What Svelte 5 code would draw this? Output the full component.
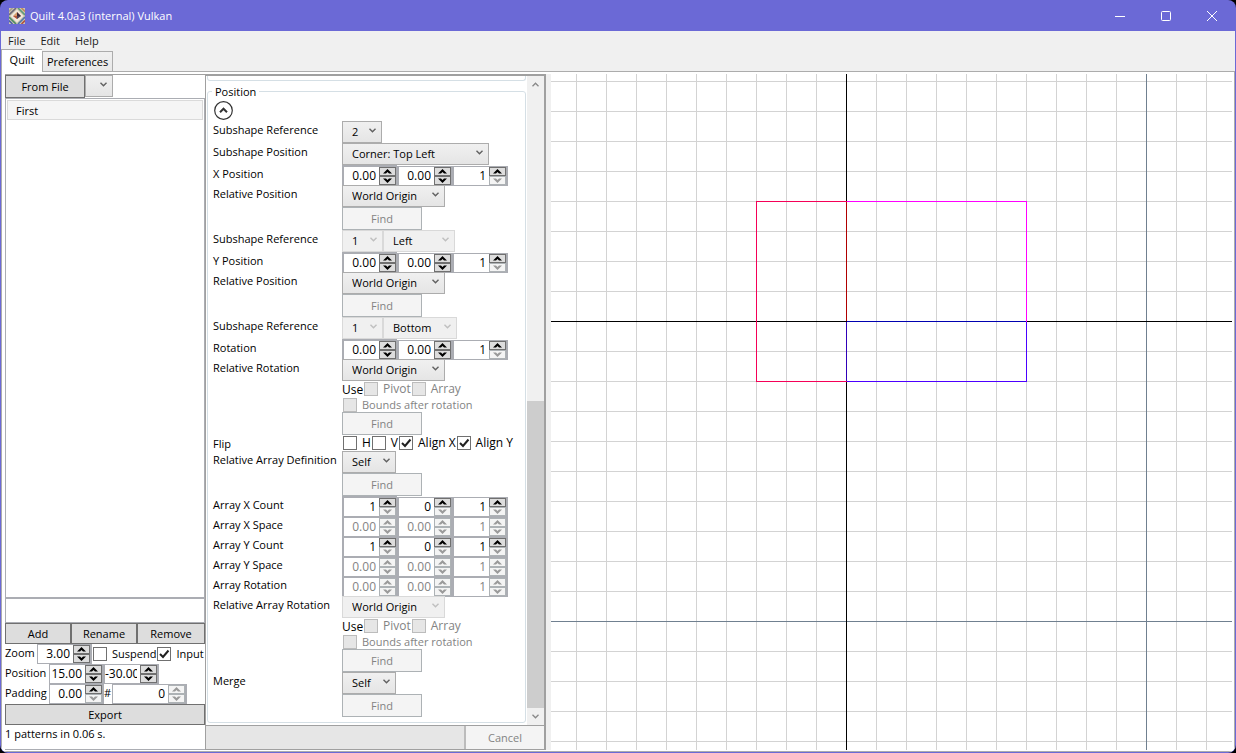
<script lang="ts">
  type Spin = { v: string; up: boolean; down: boolean };
  const sp = (v: string, up = true, down = true): Spin => ({ v, up, down });
  const free = [sp('0.00'), sp('0.00'), sp('1', true, false)];
  const count = [sp('1', true, false), sp('0', true, false), sp('1', true, false)];
  const off = [sp('0.00', false, false), sp('0.00', false, false), sp('1', false, false)];

  type Sel = { v: string; w: number; off?: boolean };
  type Row = { label?: string; kind: 'select' | 'spin' | 'find' | 'use' | 'bounds' | 'flip'; sels?: Sel[]; spins?: Spin[] };
  const world = { v: 'World Origin', w: 103 };
  const rows: Row[] = [
    { label: 'Subshape Reference', kind: 'select', sels: [{ v: '2', w: 40 }] },
    { label: 'Subshape Position', kind: 'select', sels: [{ v: 'Corner: Top Left', w: 147 }] },
    { label: 'X Position', kind: 'spin', spins: free },
    { label: 'Relative Position', kind: 'select', sels: [world] },
    { kind: 'find' },
    { label: 'Subshape Reference', kind: 'select', sels: [{ v: '1', w: 41, off: true }, { v: 'Left', w: 72, off: true }] },
    { label: 'Y Position', kind: 'spin', spins: free },
    { label: 'Relative Position', kind: 'select', sels: [world] },
    { kind: 'find' },
    { label: 'Subshape Reference', kind: 'select', sels: [{ v: '1', w: 41, off: true }, { v: 'Bottom', w: 74, off: true }] },
    { label: 'Rotation', kind: 'spin', spins: free },
    { label: 'Relative Rotation', kind: 'select', sels: [world] },
    { kind: 'use' },
    { kind: 'bounds' },
    { kind: 'find' },
    { label: 'Flip', kind: 'flip' },
    { label: 'Relative Array Definition', kind: 'select', sels: [{ v: 'Self', w: 54 }] },
    { kind: 'find' },
    { label: 'Array X Count', kind: 'spin', spins: count },
    { label: 'Array X Space', kind: 'spin', spins: off },
    { label: 'Array Y Count', kind: 'spin', spins: count },
    { label: 'Array Y Space', kind: 'spin', spins: off },
    { label: 'Array Rotation', kind: 'spin', spins: off },
    { label: 'Relative Array Rotation', kind: 'select', sels: [{ ...world, off: true }] },
    { kind: 'use' },
    { kind: 'bounds' },
    { kind: 'find' },
    { label: 'Merge', kind: 'select', sels: [{ v: 'Self', w: 54 }] },
    { kind: 'find' }
  ];

  // Grid lines of the drawing area, every 30px around the origin
  const xs = Array.from({ length: 80 }, (_, i) => 25.5 + i * 30);
  const ys = Array.from({ length: 60 }, (_, i) => 7.5 + i * 30);
</script>

{#snippet dropdown(s: Sel, label: string)}
  <span class="combo" class:off={s.off} style="width:{s.w}px">
    <select aria-label={label} disabled={s.off}><option>{s.v}</option></select>
    <svg viewBox="0 0 7 5" width="7" height="5"><path d="M.5 .8 3.5 3.8 6.5 .8" /></svg>
  </span>
{/snippet}

{#snippet spinner(s: Spin, label: string, id: string | undefined)}
  <span class="spin" class:off={!s.up && !s.down}>
    <input {id} type="text" value={s.v} aria-label={id ? undefined : label} disabled={!s.up && !s.down} />
    <span class="steps">
      <button aria-label="{label} up" disabled={!s.up}><svg viewBox="0 0 9 5" width="9" height="5"><path d="M0 4.5 4.5 0 9 4.5H6L4.5 3 3 4.5z" /></svg></button>
      <button aria-label="{label} down" disabled={!s.down}><svg viewBox="0 0 9 5" width="9" height="5"><path d="M0 .5 4.5 5 9 .5H6L4.5 2 3 .5z" /></svg></button>
    </span>
  </span>
{/snippet}

{#snippet check(text: string, on: boolean, off: boolean)}
  <label class="check" class:off>
    <span class="tick">
      <input type="checkbox" checked={on} disabled={off} />
      {#if on}<svg viewBox="0 0 14 14" width="14" height="14"><path d="M3 7 6 10 11.5 3.5" /></svg>{/if}
    </span>{text}
  </label>
{/snippet}

<div class="window">
  <header class="title">
    <svg class="logo" viewBox="0 0 16 16" width="16" height="16">
      <rect width="16" height="16" fill="#cfc6b2" />
      <g fill="none" stroke-width="1.6">
        <path d="M0 7 7 0" stroke="#6d6a78" /><path d="M0 3.5 3.5 0" stroke="#a9a08c" />
        <path d="M9 0 16 7" stroke="#5d9a78" /><path d="M12.5 0 16 3.5" stroke="#c08a5c" />
        <path d="M0 9 7 16" stroke="#4d8a62" /><path d="M0 12.5 3.5 16" stroke="#4a62a0" />
        <path d="M9 16 16 9" stroke="#4f74a8" /><path d="M12.5 16 16 12.5" stroke="#b0503c" />
      </g>
      <path d="M8 1.5 14.5 8 8 14.5 1.5 8z" fill="#f0e9dd" />
      <path d="M8 4l4 4-4 3-4-3z" fill="#d59b6a" />
      <path d="M8 4l4 4H8z" fill="#3a2838" /><path d="M4 8h4v3z" fill="#b4553d" /><path d="M8 8h4l-4 3z" fill="#4a4258" />
    </svg>
    <h1>Quilt 4.0a3 (internal) Vulkan</h1>
    <div class="winbtns">
      <button aria-label="Minimize"><svg viewBox="0 0 10 10" width="10" height="10"><path d="M0 5.5h10" /></svg></button>
      <button aria-label="Maximize"><svg viewBox="0 0 10 10" width="10" height="10"><rect x=".5" y=".5" width="9" height="9" rx="1" /></svg></button>
      <button aria-label="Close"><svg viewBox="0 0 10 10" width="10" height="10"><path d="M0 0 10 10M10 0 0 10" /></svg></button>
    </div>
  </header>

  <div class="body">
    <nav class="menu"><button>File</button><button>Edit</button><button>Help</button></nav>
    <div class="tabs" role="tablist">
      <button role="tab" aria-selected="true" class="tab on">Quilt</button>
      <button role="tab" aria-selected="false" class="tab">Preferences</button>
    </div>

    <main>
      <aside>
        <div class="bar">
          <button class="btn from">From File</button>
          {@render dropdown({ v: '', w: 28 }, 'Source')}
        </div>
        <ul class="list"><li>First</li></ul>
        <input class="name" type="text" aria-label="Pattern name" />
        <div class="three">
          <button class="btn">Add</button><button class="btn">Rename</button><button class="btn">Remove</button>
        </div>
        <div class="line">
          <label for="zoom" class="cap zoom">Zoom</label>{@render spinner(sp('3.00'), 'Zoom', 'zoom')}
          {@render check('Suspend', false, false)}{@render check('Input', true, false)}
        </div>
        <div class="line">
          <label for="pos" class="cap">Position</label>{@render spinner(sp('15.00'), 'Position X', 'pos')}{@render spinner(sp('-30.00'), 'Position Y', undefined)}
        </div>
        <div class="line">
          <label for="pad" class="cap">Padding</label>{@render spinner(sp('0.00', true, false), 'Padding', 'pad')}
          <label for="num" class="cap hash">#</label><span class="wide">{@render spinner({ v: '0', up: false, down: false }, 'Number', 'num')}</span>
        </div>
        <button class="btn export">Export</button>
        <p class="status">1 patterns in 0.06 s.</p>
      </aside>

      <section class="editor">
        <div class="view">
          <div class="scroll">
            <div class="prev"></div>
            <fieldset>
              <legend>Position</legend>
              <button class="fold" aria-label="Collapse">
                <svg viewBox="0 0 19 19" width="19" height="19"><circle cx="9.5" cy="9.5" r="8.8" /><path d="M6 11.2 9.5 7.7 13 11.2" /></svg>
              </button>
              <div class="rows">
                {#each rows as r}
                  <div class="row">
                    <span class="lab">{r.label ?? ''}</span>
                    <div class="ctl {r.kind}">
                      {#if r.kind === 'select'}
                        {#each r.sels ?? [] as s}{@render dropdown(s, r.label ?? '')}{/each}
                      {:else if r.kind === 'spin'}
                        {#each r.spins ?? [] as s}{@render spinner(s, r.label ?? '', undefined)}{/each}
                      {:else if r.kind === 'find'}
                        <button disabled>Find</button>
                      {:else if r.kind === 'use'}
                        <span class="usetext">Use</span>{@render check('Pivot', false, true)}{@render check('Array', false, true)}
                      {:else if r.kind === 'bounds'}
                        {@render check('Bounds after rotation', false, true)}
                      {:else}
                        {@render check('H', false, false)}{@render check('V', false, false)}{@render check('Align X', true, false)}{@render check('Align Y', true, false)}
                      {/if}
                    </div>
                  </div>
                {/each}
              </div>
            </fieldset>
          </div>
          <div class="track">
            <button aria-label="Scroll up"><svg viewBox="0 0 7 5" width="7" height="5"><path d="M.5 4.2 3.5 1.2 6.5 4.2" /></svg></button>
            <div class="rail"><div class="thumb"></div></div>
            <button aria-label="Scroll down"><svg viewBox="0 0 7 5" width="7" height="5"><path d="M.5 .8 3.5 3.8 6.5 .8" /></svg></button>
          </div>
        </div>
        <div class="foot"><div class="progress"></div><button disabled>Cancel</button></div>
      </section>

      <svg class="canvas" shape-rendering="crispEdges" role="img" aria-label="Pattern drawing">
        <g stroke="#d3d3d3">
          {#each xs as x}<line x1={x} x2={x} y1="0" y2="100%" />{/each}
          {#each ys as y}<line x1="0" x2="100%" y1={y} y2={y} />{/each}
        </g>
        <g stroke="#708090">
          <line x1="595.5" x2="595.5" y1="0" y2="100%" />
          <line x1="0" x2="100%" y1="547.5" y2="547.5" />
        </g>
        <g stroke="#000">
          <line x1="295.5" x2="295.5" y1="0" y2="100%" />
          <line x1="0" x2="100%" y1="247.5" y2="247.5" />
        </g>
        <g fill="none">
          <path d="M295.5 127.5H205.5V307.5H295.5" stroke="#f50057" />
          <path d="M295.5 127.5H475.5V247.5" stroke="#ff00ff" />
          <path d="M295.5 128V247" stroke="#b00000" />
          <path d="M296 247.5H475" stroke="#0000b0" />
          <path d="M295.5 248V307" stroke="#3000b8" />
          <path d="M296 307.5H475.5V248" stroke="#4c00ff" />
        </g>
      </svg>
    </main>
  </div>
</div>

<style>
  :global(body) { margin: 0; background: #000; }
  * { box-sizing: border-box; }
  .window {
    height: 100vh; display: flex; flex-direction: column; background: #6b69d6;
    border-radius: 8px; overflow: hidden; padding: 0 1px 1px;
    font: 11px/18px "Open Sans", "Noto Sans", sans-serif; color: #000;
  }
  button, input, select { font: inherit; color: inherit; margin: 0; padding: 0; border: 0; border-radius: 0; background: none; }
  .title { height: 31px; flex: none; display: flex; align-items: center; padding-left: 8px; color: #fff; }
  h1 { font: inherit; margin: 0 auto 0 5px; }
  .winbtns { display: flex; }
  .winbtns button { width: 46px; height: 31px; display: grid; place-items: center; }
  .winbtns svg { fill: none; stroke: #fff; }

  .body { flex: 1; min-height: 0; display: flex; flex-direction: column; background: #f0f0f0; border-radius: 0 0 6px 6px; overflow: hidden; }
  .menu { display: flex; gap: 15px; padding: 1px 7px 0; height: 18px; }
  .menu button { color: #212121; }
  .tabs { display: flex; align-items: flex-end; height: 22px; }
  .tab { height: 20px; border: 1px solid #acacac; border-bottom: 0; padding: 0 4px; background: linear-gradient(#f0f0f0, #e8e8e8); }
  .tab.on { height: 23px; width: 41px; background: #fff; padding: 0 0 3px; margin-bottom: -1px; z-index: 1; border-right: 0; }

  main { flex: 1; min-height: 0; display: flex; background: #fff; border: 1px solid #acacac; padding: 2px 2px 1px 3px; }
  aside { width: 200px; flex: none; display: flex; flex-direction: column; border-top: 1px solid #a0a0a0; overflow: hidden; }
  .bar { display: flex; height: 23px; flex: none; }
  .btn { background: #ddd; border: 1px solid #707070; height: 21px; }
  .from { width: 80px; height: 23px; }
  .list { flex: 1; list-style: none; margin: 0; padding: 1px; border: 1px solid #abadb3; }
  .list li { height: 20px; border: 1px solid #dadada; background: #f5f5f5; padding-left: 8px; line-height: 20px; }
  .name { height: 25px; border: 1px solid #abadb3; width: 100%; flex: none; }
  .three { display: grid; grid-template-columns: 66px 66px 1fr; }
  .line { display: flex; height: 20px; }
  .cap { flex: none; width: 44px; }
  .zoom { width: 32px; }
  .hash { width: 8px; }
  .line .check { height: 20px; }
  .export { width: 100%; flex: none; }
  .status { margin: 0; height: 25px; flex: none; border-bottom: 1px solid #abadb3; }

  .combo { display: inline-grid; height: 22px; border: 1px solid #acacac; background: linear-gradient(#f0f0f0, #e5e5e5); flex: none; }
  .combo select { grid-area: 1/1; appearance: none; width: 100%; padding-left: 9px; outline: 0; opacity: 1; color: #000; }
  .combo svg { grid-area: 1/1; justify-self: end; margin: 6px 5px 0 0; pointer-events: none; fill: none; stroke: #606060; stroke-width: 1.4; }
  .combo.off { border-color: #d9d9d9; background: #f0f0f0; }
  .combo.off svg { stroke: #bfbfbf; }

  .spin { display: flex; width: 55px; height: 20px; border: 1px solid #abadb3; border-right-width: 2px; background: #fff; flex: none; }
  .spin input { flex: 1; min-width: 0; width: 0; text-align: right; padding-right: 3px; font-size: 12px; }
  .spin.off input { color: #838383; }
  .steps { width: 17px; display: grid; grid-template-rows: 9px 9px; }
  .steps button { border: 1px solid #707070; background: #ddd; display: grid; place-items: center; }
  .steps button:disabled { border-color: #adb2b5; background: #f4f4f4; }
  .steps button:disabled path { fill: #9a9a9a; }
  .wide { display: contents; }
  .wide .spin { width: 75px; }
  .wide .spin input { color: #000; }

  .check { display: inline-flex; align-items: center; gap: 5px; height: 16px; flex: none; margin-left: 1px; }
  .tick { display: grid; }
  .tick input { grid-area: 1/1; appearance: none; width: 14px; height: 14px; border: 1px solid #707070; background: #fff; }
  .tick svg { grid-area: 1/1; fill: none; stroke: #212121; stroke-width: 2; pointer-events: none; }
  .check.off { color: #838383; }
  .check.off input { border-color: #bcbcbc; background: #e6e6e6; }

  .editor { width: 341px; flex: none; display: flex; flex-direction: column; border: 2px solid #a0a0a0; border-left-width: 1px; border-bottom-width: 1px; }
  .view { flex: 1; min-height: 0; display: flex; overflow: hidden; }
  .scroll { flex: 1; padding: 0 1px; }
  .prev { height: 5px; border: 1px solid #d5dfe5; border-top: 0; border-radius: 0 0 3px 3px; }
  fieldset { margin: 2px 0 0; padding: 0 0 5px 5px; border: 1px solid #d5dfe5; border-radius: 3px; min-width: 0; }
  legend { padding: 0 3px; margin-left: -1px; line-height: 17px; }
  .fold { display: block; width: 21px; height: 21px; padding-left: 1px; }
  .fold svg { display: block; fill: #fff; stroke: #333; stroke-width: 1.2; }
  .fold path { stroke-width: 2; fill: none; }
  .row { display: grid; grid-template-columns: 129px 1fr; }
  .lab { white-space: nowrap; height: 15px; }
  .ctl { display: flex; }
  .find button { width: 80px; height: 23px; border: 1px solid #adb2b5; background: #f4f4f4; color: #838383; }
  .use, .flip { height: 16px; font-size: 12px; }
  .bounds { height: 15px; }
  .usetext { width: 21px; }

  .track { width: 17px; background: #f0f0f0; display: flex; flex-direction: column; }
  .track button { height: 17px; display: grid; place-items: center; }
  .track svg { fill: none; stroke: #888; stroke-width: 1.3; }
  .rail { flex: 1; display: flex; flex-direction: column; justify-content: flex-end; }
  .thumb { height: 50%; background: #cdcdcd; }
  .foot { display: flex; height: 24px; border-top: 1px solid #a0a0a0; }
  .progress { flex: 1; background: #e6e6e6; }
  .foot button { width: 80px; background: #f4f4f4; color: #838383; border-left: 2px solid #bcbcbc; }

  .canvas { flex: 1; min-width: 0; border-left: 5px solid #f0f0f0; }
</style>
